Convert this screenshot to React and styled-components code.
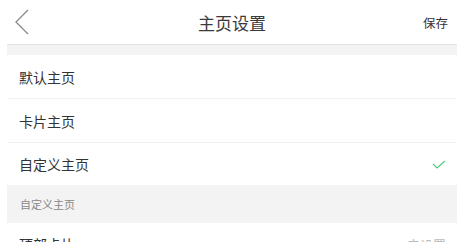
import React from 'react';
import styled, { createGlobalStyle } from 'styled-components';

const GlobalStyle = createGlobalStyle`
  body {
    margin: 0;
    background: #fff;
    font-family: "Noto Sans CJK SC", "Liberation Sans", sans-serif;
    overflow: hidden;
  }
`;

const Page = styled.div`
  margin: 0 4px 0 7px;
  height: 242px;
  overflow: hidden;
`;

const Header = styled.div`
  height: 44px;
  display: grid;
  grid-template-columns: 60px 1fr 60px;
  align-items: center;
  border-bottom: 1px solid #e2e2e2;
`;

const Back = styled.div`
  padding-left: 7px;
  display: flex;
  align-items: center;
`;

const Title = styled.div`
  text-align: center;
  font-size: 17px;
  color: #3a3a3a;
`;

const Save = styled.div`
  text-align: right;
  padding-right: 9px;
  font-size: 12.5px;
  color: #333;
`;

const Gap = styled.div`
  height: 10px;
  background: #f3f3f3;
`;

const Row = styled.div`
  height: ${p => (p.$last ? '42px' : '43px')};
  display: flex;
  align-items: center;
  justify-content: space-between;
  padding: 0 11px 0 12px;
  font-size: 14px;
  color: #333;
  border-bottom: ${p => (p.$last ? 'none' : '1px solid #f2f2f2')};
`;

const Section = styled.div`
  height: 38px;
  display: flex;
  align-items: center;
  padding-left: 13px;
  background: #f3f3f3;
  font-size: 11px;
  color: #888;
`;

const Sub = styled.span`
  color: #bbb;
  font-size: 13px;
`;

const Chevron = () => (
  <svg width="16" height="26" viewBox="0 0 16 26">
    <path d="M14 1 L2 13 L14 25" fill="none" stroke="#8a8a8a" strokeWidth="1.3" />
  </svg>
);

const Check = () => (
  <svg width="14" height="9" viewBox="0 0 14 9">
    <path d="M1 4 L5 8 L13 1" fill="none" stroke="#4ccf7f" strokeWidth="1.2" />
  </svg>
);

export default function App() {
  return (
    <>
      <GlobalStyle />
      <Page>
        <Header>
          <Back><Chevron /></Back>
          <Title>主页设置</Title>
          <Save>保存</Save>
        </Header>
        <Gap />
        <Row>默认主页</Row>
        <Row>卡片主页</Row>
        <Row $last>
          自定义主页
          <Check />
        </Row>
        <Section>自定义主页</Section>
        <Row $last>
          顶部卡片
          <Sub>未设置</Sub>
        </Row>
      </Page>
    </>
  );
}
